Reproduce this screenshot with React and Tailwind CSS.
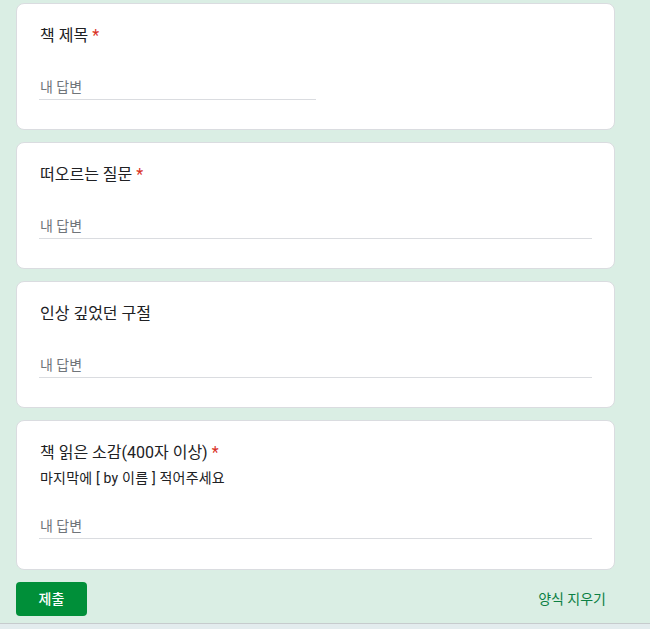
import React from 'react';

const questions = [
  { title: '책 제목', required: true, half: true },
  { title: '떠오르는 질문', required: true },
  { title: '인상 깊었던 구절', required: false },
  { title: '책 읽은 소감(400자 이상)', required: true, desc: '마지막에 [ by 이름 ] 적어주세요' },
];

const QuestionCard = ({ title, required, desc, half }) => (
  <div className={`w-[599px] bg-white border border-[#dadce0] rounded-lg px-[23px] pt-5 ${desc ? 'pb-[30px]' : 'pb-[29px]'}`}>
    <div className="text-base leading-6 text-[#202124]">
      {title}
      {required && <span className="text-[#d93025] ml-1">*</span>}
    </div>
    {desc && <div className="mt-[3px] text-sm leading-5 text-[#202124] tracking-[0.2px]">{desc}</div>}
    <div
      className={`${desc ? 'mt-7' : 'mt-[29px]'} ${half ? 'w-[277px] -ml-px' : '-mx-px'} border-b border-[#dadce0] pb-[2px]`}
    >
      <span className="block pl-px text-sm leading-5 text-[#70757a]">내 답변</span>
    </div>
  </div>
);

export default function App() {
  return (
    <div
      className="h-[629px] overflow-hidden bg-[#daeee4] flex flex-col"
      style={{ fontFamily: 'Roboto, "Noto Sans CJK KR", sans-serif' }}
    >
      <div className="pt-[3px] pl-4 flex flex-col gap-3">
        {questions.map((q) => (
          <QuestionCard key={q.title} {...q} />
        ))}
        <div className="w-[599px] flex items-center justify-between">
          <button
            type="button"
            className="w-[71px] h-[34px] rounded bg-[#008f39] text-white text-sm font-medium"
          >
            제출
          </button>
          <button type="button" className="px-2 mr-px text-sm text-[#0b8043]">
            양식 지우기
          </button>
        </div>
      </div>
      <div className="mt-[7px] flex-1 border-t border-[#c6cbcd] bg-[#e3ecee]" />
    </div>
  );
}
